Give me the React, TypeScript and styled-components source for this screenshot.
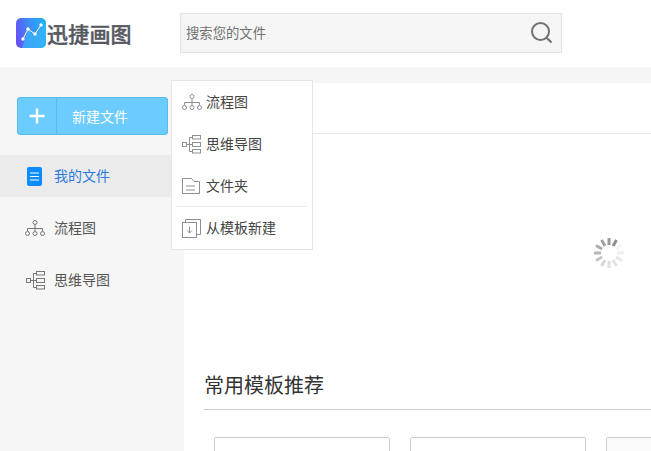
import React from "react";
import styled, { createGlobalStyle } from "styled-components";

const Global = createGlobalStyle`
  html, body {
    margin: 0;
    height: 100%;
    overflow: hidden;
    background: #f6f6f6;
    font-family: "Noto Sans CJK SC", "Liberation Sans", sans-serif;
  }
  * {
    box-sizing: border-box;
  }
`;

const Page = styled.div`
  height: 451px;
  display: flex;
  flex-direction: column;
  position: relative;
  overflow: hidden;
`;

const Header = styled.header`
  height: 67px;
  flex: none;
  background: #fff;
  display: flex;
  align-items: center;
  padding: 0 0 1px 16px;
`;

const Brand = styled.div`
  width: 164px;
  display: flex;
  align-items: center;
  gap: 1px;
`;

const BrandName = styled.span`
  font-size: 21px;
  line-height: 30px;
  font-weight: 500;
  letter-spacing: 0.2px;
  color: #55585f;
  -webkit-text-stroke: 0.4px #55585f;
`;

const SearchBox = styled.div`
  width: 382px;
  height: 40px;
  background: #f5f5f5;
  border: 1px solid #e3e3e3;
  display: flex;
  align-items: center;
  justify-content: space-between;
  padding: 0 7px 0 5px;
`;

const SearchInput = styled.input`
  flex: 1;
  border: 0;
  outline: 0;
  background: transparent;
  padding: 0 0 2px;
  font-family: inherit;
  font-size: 13.33px;
  color: #555;
  &::placeholder {
    color: #6f6f6f;
    opacity: 1;
  }
`;

const Body = styled.div`
  flex: 1;
  display: flex;
  min-height: 0;
`;

const Sidebar = styled.aside`
  width: 184px;
  flex: none;
  padding-top: 30px;
`;

const NewButton = styled.div`
  width: 151px;
  height: 38px;
  margin: 0 0 20px 17px;
  background: #6ccbff;
  border: 1px solid #55bcf0;
  border-radius: 3px;
  display: flex;
  align-items: center;
  color: #fff;
  font-size: 14px;
`;

const PlusCell = styled.div`
  width: 39px;
  height: 100%;
  flex: none;
  border-right: 1px solid #55bcf0;
  display: flex;
  align-items: center;
  justify-content: center;
`;

const NewLabel = styled.span`
  margin-left: 15px;
`;

const NavRow = styled.div<{ $active?: boolean }>`
  height: 42px;
  margin-bottom: 10px;
  padding-left: 25px;
  display: flex;
  align-items: center;
  font-size: 14px;
  color: ${(p) => (p.$active ? "#2a7ae0" : "#555")};
  background: ${(p) => (p.$active ? "#ebebeb" : "transparent")};
`;

const NavIcon = styled.span<{ $inset?: number }>`
  width: 29px;
  flex: none;
  display: flex;
  align-items: center;
  padding-left: ${(p) => p.$inset ?? 0}px;
  color: #777;
`;

const RowLabel = styled.span`
  margin-bottom: 2px;
`;

const Main = styled.main`
  flex: 1;
  margin-top: 16px;
  background: #fff;
  min-width: 0;
  padding-bottom: 40px;
`;

const MainTop = styled.div`
  height: 51px;
  border-bottom: 1px solid #ececec;
`;

const Loading = styled.div`
  height: 238px;
  display: flex;
  justify-content: flex-end;
  padding: 103px 26px 0 0;
`;

const Section = styled.section`
  padding-left: 20px;
`;

const SectionTitle = styled.h2`
  margin: 0;
  height: 25px;
  font-size: 20px;
  line-height: 26px;
  font-weight: 400;
  color: #333;
`;

const SectionRule = styled.div`
  height: 1px;
  margin-top: 12px;
  background: #ccc;
`;

const Cards = styled.div`
  display: flex;
  gap: 20px;
  margin: 27px 0 0 10px;
`;

const Card = styled.div<{ $tint?: boolean }>`
  width: 176px;
  height: 120px;
  flex: none;
  border: 1px solid #ccc;
  border-radius: 2px;
  background: ${(p) => (p.$tint ? "#fafafa" : "#fff")};
`;

const Menu = styled.div`
  position: absolute;
  left: 171px;
  top: 80px;
  width: 142px;
  height: 170px;
  background: #fff;
  border: 1px solid #e6e6e6;
  padding: 0 5px;
  z-index: 2;
`;

const MenuItem = styled.div`
  height: 42px;
  display: flex;
  align-items: center;
  padding-left: 5px;
  font-size: 14px;
  color: #444;
`;

const MenuIcon = styled.span`
  width: 24px;
  flex: none;
  display: flex;
  align-items: center;
  color: #8f8f8f;
`;

const MenuRule = styled.div`
  height: 1px;
  margin-top: -1px;
  background: #ebebeb;
`;

function FlowIcon() {
  return (
    <svg width="20" height="17" viewBox="0 0 20 17" fill="none" stroke="currentColor" strokeWidth="1">
      <circle cx="10" cy="2.5" r="2" />
      <path d="M10 4.5V11M2.5 11V8.5H17.5V11" />
      <circle cx="2.5" cy="13.5" r="2" />
      <circle cx="10" cy="13.5" r="2" />
      <circle cx="17.5" cy="13.5" r="2" />
    </svg>
  );
}

function MindIcon() {
  return (
    <svg width="19" height="19" viewBox="0 0 19 19" fill="none" stroke="currentColor" strokeWidth="1">
      <rect x="0.5" y="7.5" width="4" height="4" />
      <rect x="10.5" y="0.5" width="8" height="3.5" />
      <rect x="10.5" y="7.5" width="8" height="4" />
      <rect x="10.5" y="14.5" width="8" height="3.5" />
      <path d="M4.5 9.5H10.5M7.5 2.5V16.5M7.5 2.5H10.5M7.5 16.5H10.5" />
    </svg>
  );
}

function FolderIcon() {
  return (
    <svg width="19" height="16" viewBox="0 0 19 16" fill="none" stroke="currentColor" strokeWidth="1">
      <path d="M0.5 0.5H9.5L12 3.5H17.5V15.5H0.5Z" />
      <path d="M4 8H13M4 12H13" />
    </svg>
  );
}

function TemplateIcon() {
  return (
    <svg width="19" height="19" viewBox="0 0 19 19" fill="none" stroke="currentColor" strokeWidth="1">
      <rect x="0.5" y="3.5" width="14" height="15" />
      <path d="M3.5 3.5V0.5H18.5V15.5H14.5" />
      <path d="M7.5 7.5V14M5 11.5L7.5 14L10 11.5" />
    </svg>
  );
}

function DocIcon() {
  return (
    <svg width="15" height="19" viewBox="0 0 15 19">
      <rect width="15" height="19" rx="2" fill="#0a8cff" />
      <path d="M3 6H12M3 9.5H12M3 13H12" stroke="#fff" strokeWidth="1.2" />
    </svg>
  );
}

function Logo() {
  return (
    <svg width="30" height="30" viewBox="0 0 30 30">
      <defs>
        <linearGradient id="logoBg" x1="0" y1="0.7" x2="1" y2="0.5">
          <stop offset="0" stopColor="#6a4ff6" />
          <stop offset="0.5" stopColor="#3a8cf6" />
          <stop offset="1" stopColor="#23b0f6" />
        </linearGradient>
      </defs>
      <rect width="30" height="30" rx="5" fill="url(#logoBg)" />
      <path d="M6 30L12 12L19 17L30 5V25A5 5 0 0 1 25 30Z" fill="#38b6fa" opacity="0.7" />
      <path d="M7 21L12 11L19 16L25 7" fill="none" stroke="#fff" strokeWidth="1" />
      <circle cx="7" cy="21" r="1.7" fill="#fff" />
      <circle cx="12" cy="11" r="1.7" fill="#fff" />
      <circle cx="19" cy="16" r="1.7" fill="#fff" />
      <circle cx="25" cy="7" r="1.7" fill="#fff" />
    </svg>
  );
}

function SearchIcon() {
  return (
    <svg width="24" height="24" viewBox="0 0 24 24" fill="none" stroke="#707176" strokeWidth="2">
      <circle cx="10.5" cy="10.5" r="8.5" />
      <path d="M16.8 17L21.5 21.5" strokeWidth="2.2" />
    </svg>
  );
}

function PlusIcon() {
  return (
    <svg width="16" height="16" viewBox="0 0 16 16" stroke="#fff" strokeWidth="2.4">
      <path d="M8 0.5V15.5M0.5 8H15.5" />
    </svg>
  );
}

// bars start upper right and fade going anticlockwise round the ring
const spinnerShades = [
  "#8f8f8f", "#9a9a9a", "#a3a3a3", "#adadad", "#b6b6b6", "#c4c4c4",
  "#d6d6d6", "#dedede", "#e2e2e2", "#e8e8e8", "#eeeeee", "#f5f5f5",
];

function Spinner() {
  return (
    <svg width="32" height="32" viewBox="-16 -16 32 32">
      {spinnerShades.map((c, i) => (
        <rect
          key={c}
          x="-1.5"
          y="-15"
          width="3"
          height="7"
          fill={c}
          transform={`rotate(${30 - i * 30})`}
        />
      ))}
    </svg>
  );
}

export default function App() {
  return (
    <Page>
      <Global />
      <Header>
        <Brand>
          <Logo />
          <BrandName>迅捷画图</BrandName>
        </Brand>
        <SearchBox>
          <SearchInput placeholder="搜索您的文件" />
          <SearchIcon />
        </SearchBox>
      </Header>
      <Body>
        <Sidebar>
          <NewButton>
            <PlusCell>
              <PlusIcon />
            </PlusCell>
            <NewLabel>新建文件</NewLabel>
          </NewButton>
          <NavRow $active>
            <NavIcon $inset={2}>
              <DocIcon />
            </NavIcon>
            <RowLabel>我的文件</RowLabel>
          </NavRow>
          <NavRow>
            <NavIcon>
              <FlowIcon />
            </NavIcon>
            <RowLabel>流程图</RowLabel>
          </NavRow>
          <NavRow>
            <NavIcon $inset={1}>
              <MindIcon />
            </NavIcon>
            <RowLabel>思维导图</RowLabel>
          </NavRow>
        </Sidebar>
        <Main>
          <MainTop />
          <Loading>
            <Spinner />
          </Loading>
          <Section>
            <SectionTitle>常用模板推荐</SectionTitle>
            <SectionRule />
            <Cards>
              <Card />
              <Card />
              <Card $tint />
            </Cards>
          </Section>
        </Main>
      </Body>
      <Menu>
        <MenuItem>
          <MenuIcon>
            <FlowIcon />
          </MenuIcon>
          <RowLabel>流程图</RowLabel>
        </MenuItem>
        <MenuItem>
          <MenuIcon>
            <MindIcon />
          </MenuIcon>
          <RowLabel>思维导图</RowLabel>
        </MenuItem>
        <MenuItem>
          <MenuIcon>
            <FolderIcon />
          </MenuIcon>
          <RowLabel>文件夹</RowLabel>
        </MenuItem>
        <MenuRule />
        <MenuItem>
          <MenuIcon>
            <TemplateIcon />
          </MenuIcon>
          <RowLabel>从模板新建</RowLabel>
        </MenuItem>
      </Menu>
    </Page>
  );
}
